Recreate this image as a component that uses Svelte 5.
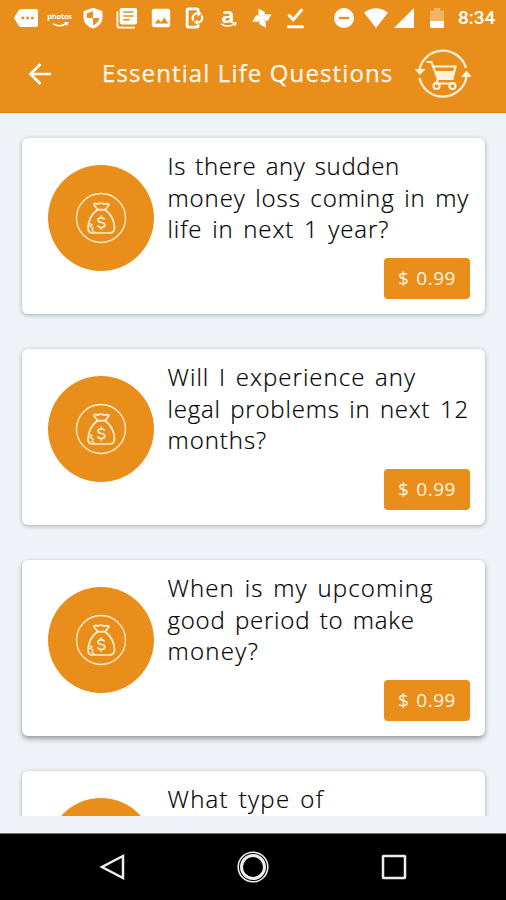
<script>
  const questions = [
    { price: '$ 0.99', lines: [['Is there any sudden', 0.62], ['money loss coming in my', 0.9], ['life in next 1 year?', 0.93]] },
    { price: '$ 0.99', lines: [['Will I experience any', 1.02], ['legal problems in next 12', 0.8], ['months?', 0.95]] },
    { price: '$ 0.99', lines: [['When is my upcoming', 1.1], ['good period to make', 0.77], ['money?', 1.3]] },
    { price: null, lines: [['What type of', 1.25]] }
  ];
</script>

<div class="screen">
  <header>
    <div class="status">
      <div class="notices">
        <svg viewBox="0 0 24 22"><path d="M0 11 4.500 3.500Q5.500 2 7.500 2H22q2 0 2 2v14q0 2-2 2H7.500q-2 0-3-1.500z" fill="#fff"/><path d="M7.500 9.700h2.600v2.600H7.500zM12.300 9.700h2.600v2.600h-2.600zM17.100 9.700h2.600v2.600h-2.600z" fill="#e98e1b"/></svg>
        <div class="brand"><span class="photos">photos</span><svg viewBox="0 0 24 9"><path d="M3 2q9 6 18-.5M18 .9l4-.3-1 4" fill="none" stroke="#fff" stroke-width="1.800"/></svg></div>
        <svg viewBox="0 0 24 24"><path d="M12 .8 22.300 4.500v7.200c0 5.800-4.600 9.900-10.300 11.800C6.300 21.600 1.700 17.500 1.700 11.700V4.500z" fill="#fff"/><path d="M12 4.500V12H5.200V7zM12 12h7q-.8 5.500-7 8z" fill="#e98e1b"/></svg>
        <svg viewBox="0 0 24 24"><path d="M6 1h15q2 0 2 2v14q0 2-2 2H6q-2 0-2-2V3q0-2 2-2z" fill="#fff"/><path d="M1.500 5V20q0 2.500 2.500 2.500h16.500" fill="none" stroke="#fff" stroke-width="2"/><path d="M8 5.500h11M8 9.800h11M8 14h7" stroke="#e98e1b" stroke-width="1.700"/></svg>
        <svg viewBox="0 0 24 24"><path d="M4.500 2h15Q22 2 22 4.500v15q0 2.500-2.500 2.500h-15Q2 22 2 19.500v-15Q2 2 4.500 2z" fill="#fff"/><path d="m5 18 4-5 3 3.500 3.500-5L20 18z" fill="#e98e1b"/></svg>
        <svg viewBox="0 0 24 24" fill="none" stroke="#fff"><path d="M16.500 6V3.500q0-1.500-1.500-1.500H6Q4.500 2 4.500 3.500v17Q4.500 22 6 22h9q1.500 0 1.500-1.500V19" stroke-width="3"/><path d="M11.500 15a5 5 0 0 1 4.500-8M20 9a5 5 0 0 1-4 8" stroke-width="2.200"/><path d="m16 3.500 4.500 3.500L16 10.500zM16 13.500v6l-4-3z" fill="#fff" stroke="none"/></svg>
        <div class="brand"><span class="amazon">a</span><svg viewBox="0 0 24 9"><path d="M3 2.500q9 6 18-.5M18 1.400l4-.3-1 4" fill="none" stroke="#fff" stroke-width="1.800"/></svg></div>
        <svg viewBox="0 0 24 24" fill="#fff"><path d="M11.500 11.500 8 8V1.500l7 4v3zM12.500 11.500 16 8h6.500l-4 7h-3zM12.500 12.500 16 16v6.500l-7-4v-3zM11.500 12.500 8 16H1.500l4-7h3z"/><circle cx="12" cy="12" r="2.500"/></svg>
        <svg viewBox="0 0 24 24"><path d="m5 8.500 5 5.500L20 2.500M3.500 21.500h18" fill="none" stroke="#fff" stroke-width="3.200"/></svg>
      </div>
      <div class="signals">
        <svg class="dnd" viewBox="0 0 20 20"><circle cx="10" cy="10" r="10" fill="#fff"/><path d="M5 10h10" stroke="#e98e1b" stroke-width="2.300"/></svg>
        <svg class="wifi" viewBox="0 0 24 20"><path d="M12 20 0 4.500Q12-4 24 4.500z" fill="#fff"/></svg>
        <svg class="cell" viewBox="0 0 20 20"><path d="M20 0v20H0z" fill="#fff"/></svg>
        <svg class="battery" viewBox="0 0 14 20"><path d="M0 2.500h4V0h6v2.500h4V13H0z" fill="#fff" opacity=".35"/><path d="M0 13h14v5.500q0 1.500-1.500 1.500h-11Q0 20 0 18.500z" fill="#fff"/></svg>
        <span class="time">8:34</span>
      </div>
    </div>
    <div class="bar">
      <svg class="back" viewBox="0 0 24 24"><path d="M23 12H2.500M12.500 2 2.500 12l10 10" fill="none" stroke="#fff" stroke-width="2.700"/></svg>
      <h1>Essential Life Questions</h1>
      <svg class="cart" viewBox="0 0 56 52" fill="none" stroke="#fff1d8" stroke-width="2.200">
        <path d="M4.500 21.500A24 24 0 0 1 51 20M51.500 29A24 24 0 0 1 4.500 30"/>
        <path d="m.5 21.500 4.300 5 5-5zM47 28.500l4.500-5.500 4.500 5.500z" fill="#fff1d8" stroke-width="1"/>
        <path d="M11.500 14h5L23 31l-2 4.500h19"/>
        <path d="M18.500 18.500h22L37.500 31H23"/>
        <path d="M20.500 23.500h19l-2 8H23.500z" fill="#fff1d8" stroke-width="1"/>
        <circle cx="21.500" cy="38" r="3"/><circle cx="37.500" cy="38" r="3"/>
      </svg>
    </div>
  </header>

  <main>
    {#each questions as { lines, price }, i}
      <article class:deep={i === 2}>
        <div class="disc">
          <svg viewBox="0 0 52 52" fill="none" stroke="#ffedcf" stroke-width="1.700">
            <circle cx="26" cy="26" r="24.500" stroke-width="1.300"/>
            <path d="M22.500 17.500 18.800 12.500q1.700-2 4-.3 3-2 6.200 0 3-1.500 5 .3L30.500 17.500zM22 18h8.500q8.500 6.500 9 17.500 0 5.500-5 5.500H18q-5 0-5-5 .5-11.500 9-18z" stroke-linejoin="round"/>
            <path d="M14 31.500l3 1-2 2 3 1.500-1 2.500 3 2" stroke-width="1.200"/>
            <path d="M29.700 27.500q-1-1.700-3.500-1.700-3.200 0-3.200 2.200t3.500 2.500q3.300.4 3.300 2.600 0 2.400-3.500 2.400-2.700 0-3.800-2M26.200 23.500v2.300M26.200 35.500v2.300"/>
          </svg>
        </div>
        <div class="content">
          <p>{#each lines as [text, tracking]}<span style="letter-spacing: {tracking}px">{text}</span>{/each}</p>
          {#if price}<button>{price}</button>{/if}
        </div>
      </article>
    {/each}
  </main>

  <nav>
    <svg viewBox="0 0 32 32"><path d="M26 5v22L5 16z"/></svg>
    <svg viewBox="0 0 32 32"><circle cx="16" cy="16" r="14.800" stroke-width="1.600"/><circle cx="16" cy="16" r="11.500" stroke-width="3"/></svg>
    <svg viewBox="0 0 32 32"><rect x="5" y="5" width="22" height="22" rx=".5"/></svg>
  </nav>
</div>

<style>
  .screen { width: 506px; height: 900px; display: flex; flex-direction: column; overflow: hidden; background: #eff3f8; font-family: "Open Sans", "Noto Sans", sans-serif; }
  header { height: 113px; box-sizing: border-box; flex: none; background: #e98e1b; border-bottom: 1px solid #d98319; }
  .status { height: 35px; display: flex; justify-content: space-between; align-items: center; padding: 0 10px 0 9px; }
  .notices { display: flex; align-items: center; }
  .notices > * { width: 24px; height: 22px; margin: 0 4.850px; }
  .brand { display: flex; flex-direction: column; align-items: center; justify-content: flex-end; color: #fff; }
  .brand svg { width: 24px; height: 7px; flex: none; }
  .photos { font: 700 7.500px/10px "Open Sans", sans-serif; letter-spacing: -.2px; margin-bottom: 1px; }
  .amazon { font: 700 22px/16px "Open Sans", sans-serif; }
  .signals { display: flex; align-items: center; }
  .signals svg { height: 20px; }
  .dnd { width: 20px; margin-right: 10px; }
  .wifi { width: 24px; margin-right: 6px; }
  .cell { width: 20px; margin-right: 16px; }
  .battery { width: 14px; margin-right: 14px; }
  .time { width: 38px; font: 500 19px/35px Roboto, sans-serif; color: #fff; white-space: nowrap; }
  .bar { height: 77px; display: flex; align-items: center; padding-left: 28px; }
  .back { width: 24px; height: 24px; }
  h1 { width: 314px; margin: -1px 0 0 50px; font-size: 24px; font-weight: 400; line-height: 36px; color: #fff8ea; letter-spacing: 1.120px; white-space: nowrap; -webkit-text-stroke: .25px #fff8ea; }
  .cart { width: 56px; height: 52px; flex: none; margin-left: -1px; }
  main { height: 703px; box-sizing: border-box; flex: none; padding: 24.500px 21px 0 22px; overflow: hidden; }
  article { height: 176px; box-sizing: border-box; display: flex; padding: 12.500px 15px 15px 26px; margin-bottom: 35px; border-radius: 6px; background: #fff; box-shadow: 0 1px 4px #3d4d4a70; }
  article.deep { box-shadow: 0 3px 5px #3d4d4a78, 0 0 3px #3d4d4a22; }
  .disc { width: 106px; height: 106px; flex: none; margin-top: 15px; border-radius: 50%; background: #e98e1b; display: grid; place-items: center; }
  .disc svg { width: 52px; height: 52px; }
  .content { flex: 1; margin-left: 13.500px; display: flex; flex-direction: column; align-items: flex-end; justify-content: space-between; }
  p { align-self: flex-start; margin: 0; font-size: 24px; font-weight: 300; line-height: 31.600px; word-spacing: 2.500px; color: #000; -webkit-text-stroke: .2px #000; }
  p span { display: block; width: max-content; }
  button { width: 86px; height: 41px; flex: none; padding: 0; border: 0; border-radius: 4px; background: #e98e1b; color: #fff5e4; font: 400 19px/41px "Open Sans", "Noto Sans", sans-serif; letter-spacing: .5px; word-spacing: 1.500px; }
  nav { height: 67px; box-sizing: border-box; margin-top: auto; flex: none; display: flex; justify-content: center; align-items: center; gap: 108.500px; background: #000; border-top: 1px solid #667170; }
  nav svg { width: 32px; height: 32px; fill: none; stroke: #eee; stroke-width: 2.500; }
</style>
